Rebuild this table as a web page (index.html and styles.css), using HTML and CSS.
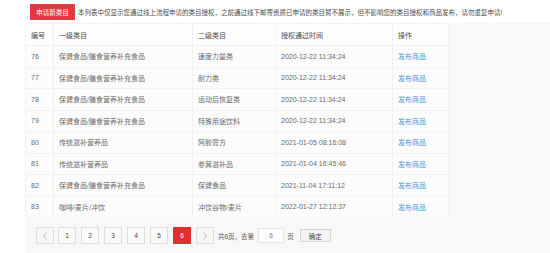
FILE: index.html
```html
<!DOCTYPE html>
<html lang="zh-CN">
<head>
<meta charset="utf-8">
<title>类目授权</title>
<link rel="stylesheet" href="styles.css">
</head>
<body>
<div class="top">
  <button class="apply-btn">申请新类目</button>
  <span class="notice">本列表中仅显示您通过线上流程申请的类目授权，之前通过线下邮寄资质已申请的类目暂不展示，但不影响您的类目授权和商品发布，请勿重复申请!</span>
</div>
<div class="panel">
  <table class="grid">
    <colgroup>
      <col class="c1"><col class="c2"><col class="c3"><col class="c4"><col class="c5">
    </colgroup>
    <thead>
      <tr><th>编号</th><th>一级类目</th><th>二级类目</th><th>授权通过时间</th><th>操作</th></tr>
    </thead>
    <tbody>
      <tr><td>76</td><td>保健食品/膳食营养补充食品</td><td>速度力量类</td><td>2020-12-22 11:34:24</td><td><a class="link">发布商品</a></td></tr>
      <tr><td>77</td><td>保健食品/膳食营养补充食品</td><td>耐力类</td><td>2020-12-22 11:34:24</td><td><a class="link">发布商品</a></td></tr>
      <tr><td>78</td><td>保健食品/膳食营养补充食品</td><td>运动后恢复类</td><td>2020-12-22 11:34:24</td><td><a class="link">发布商品</a></td></tr>
      <tr><td>79</td><td>保健食品/膳食营养补充食品</td><td>特殊用途饮料</td><td>2020-12-22 11:34:24</td><td><a class="link">发布商品</a></td></tr>
      <tr><td>80</td><td>传统滋补营养品</td><td>阿胶膏方</td><td>2021-01-05 08:16:08</td><td><a class="link">发布商品</a></td></tr>
      <tr><td>81</td><td>传统滋补营养品</td><td>参茸滋补品</td><td>2021-01-04 16:45:46</td><td><a class="link">发布商品</a></td></tr>
      <tr><td>82</td><td>保健食品/膳食营养补充食品</td><td>保健食品</td><td>2021-11-04 17:11:12</td><td><a class="link">发布商品</a></td></tr>
      <tr><td>83</td><td>咖啡/麦片/冲饮</td><td>冲饮谷物/麦片</td><td>2022-01-27 12:12:37</td><td><a class="link">发布商品</a></td></tr>
    </tbody>
  </table>
  <div class="pager">
    <span class="pg arrow"><svg width="6" height="8" viewBox="0 0 6 8"><polyline points="4.5,0.5 1.5,4 4.5,7.5" fill="none" stroke="#aaa" stroke-width="0.8"/></svg></span>
    <span class="pg">1</span>
    <span class="pg">2</span>
    <span class="pg">3</span>
    <span class="pg">4</span>
    <span class="pg">5</span>
    <span class="pg active">6</span>
    <span class="pg arrow"><svg width="6" height="8" viewBox="0 0 6 8"><polyline points="1.5,0.5 4.5,4 1.5,7.5" fill="none" stroke="#aaa" stroke-width="0.8"/></svg></span>
    <span class="total">共6页，去第</span>
    <span class="jump">6</span>
    <span class="unit">页</span>
    <span class="ok">确定</span>
  </div>
</div>
</body>
</html>
```
FILE: styles.css
```css
html, body {
  margin: 0;
  padding: 0;
  background: #fff;
}
body {
  font-family: "Liberation Sans", "Noto Sans CJK SC", sans-serif;
  color: #555;
  width: 550px;
  height: 253px;
  overflow: hidden;
}
.top {
  display: flex;
  align-items: center;
  gap: 3px;
  padding: 3px 0 0 30px;
  height: 17px;
}
.apply-btn {
  border: 0;
  background: #e03a3c;
  color: #fff;
  font-family: inherit;
  font-size: 6.5px;
  width: 45px;
  height: 16px;
  padding: 0;
  border-radius: 1px;
}
.notice {
  font-size: 6.5px;
  color: #4a4a4a;
  white-space: nowrap;
}
.panel {
  margin-left: 25px;
  margin-top: 3px;
  background: #f8f8f8;
  height: 240px;
}
.grid {
  border-collapse: collapse;
  table-layout: fixed;
  width: 423px;
  background: #fcfcfc;
  font-size: 7px;
}
.c1 { width: 28px; }
.c2 { width: 139px; }
.c3 { width: 83px; }
.c4 { width: 117px; }
.c5 { width: 56px; }
.grid th, .grid td {
  border: 1px solid #f1f1f1;
  padding: 0 0 0 5px;
  text-align: left;
  white-space: nowrap;
  overflow: hidden;
}
.grid th {
  font-weight: normal;
  color: #4a4a4a;
  height: 21px;
  background: #fefefe;
}
.grid td {
  height: 20.5px;
  color: #6a6a6a;
}
.link {
  color: #4a9ad8;
}
.pager {
  display: flex;
  align-items: center;
  padding: 9px 0 0 11px;
  font-size: 6.5px;
  color: #555;
}
.pg {
  box-sizing: border-box;
  width: 18px;
  height: 17px;
  margin-right: 5px;
  border: 1px solid #dedede;
  background: #fafafa;
  display: flex;
  align-items: center;
  justify-content: center;
  color: #444;
}
.pg.active {
  background: #e02f2f;
  border-color: #e02f2f;
  color: #fff;
}
.pg.arrow {
  background: #f7f7f7;
  margin-right: 4px;
}
.total {
  margin-right: 4px;
}
.jump {
  box-sizing: border-box;
  width: 26px;
  height: 15px;
  background: #fff;
  border: 1px solid #e6e6e6;
  display: flex;
  align-items: center;
  justify-content: center;
  color: #777;
}
.unit {
  margin: 0 6px 0 3px;
}
.ok {
  box-sizing: border-box;
  width: 31px;
  height: 13px;
  border: 1px solid #d6d6d6;
  background: #f4f4f4;
  display: flex;
  align-items: center;
  justify-content: center;
  color: #444;
}
```
